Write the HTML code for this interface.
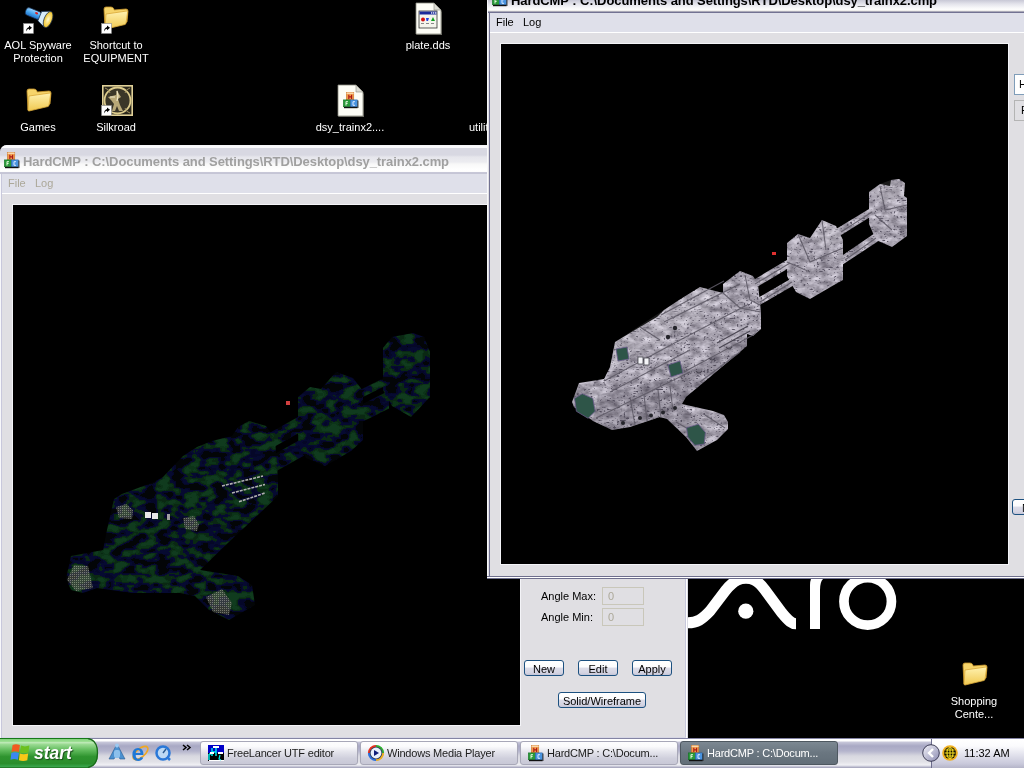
<!DOCTYPE html>
<html><head><meta charset="utf-8">
<style>
*{margin:0;padding:0;box-sizing:border-box}
html,body{width:1024px;height:768px;overflow:hidden;background:#000;font-family:"Liberation Sans",sans-serif;font-size:11px}
.a{position:absolute}
.lbl{position:absolute;color:#fff;font-size:11px;line-height:13px;text-align:center;white-space:nowrap}
.win{position:absolute;background:#e0dfe3}
.menu{position:absolute;background:#dfe0ea;border-bottom:1px solid #fff}
.menu span{position:absolute;top:3px;font-size:11px;line-height:13px}
.title{position:absolute;font-weight:bold;font-size:13px;white-space:nowrap;line-height:16px;letter-spacing:-0.08px}
.btn{position:absolute;border:1px solid #1c5180;border-radius:3px;background:linear-gradient(#fff 0%,#fcfcfd 42%,#dcdce8 52%,#d4d4e2 85%,#c4c4d6 100%);font-size:11px;text-align:center;line-height:14px;color:#000;padding-top:1px}
.tb{position:absolute;top:741px;height:24px;border-radius:3px;border:1px solid #a8a8b8;background:linear-gradient(#fdfdfe,#fbfbfc 20%,#e4e4ec 45%,#cfcfdc 75%,#c8c8d6);color:#1c1c1c;font-size:11px;line-height:22px;white-space:nowrap;letter-spacing:-0.2px}
</style></head><body><div id="root" style="position:absolute;left:0;top:0;width:1024px;height:768px;will-change:transform">

<!-- VAIO logo (wallpaper) -->
<svg class="a" style="left:0;top:0" width="1024" height="768">
  <path d="M660,622.8 L688,622.8 C697,622.8 702,619.5 710,611 L726,590 C735,579 741,578.3 746,578.3 C751,578.3 757,579 765,590 L782,613 C789,621.5 792,623.8 796,623.8" stroke="#fff" stroke-width="11" fill="none" stroke-linecap="butt"/>
  <circle cx="745.8" cy="611.2" r="7.6" fill="#fff"/>
  <path d="M810,629 L810,585 Q810,572 823,572 L823,579 Q820,582 820,590 L820,629 Z" fill="#fff"/>
  <circle cx="867.7" cy="601.4" r="23.75" stroke="#fff" stroke-width="9.7" fill="none"/>
</svg>
<!-- desktop icons -->
<svg class="a" style="left:23px;top:6px" width="32" height="24" viewBox="0 0 32 24">
<defs><linearGradient id="flb" x1="0" y1="0" x2="0" y2="1"><stop offset="0" stop-color="#9fd4ff"/><stop offset="0.5" stop-color="#4aa8f0"/><stop offset="1" stop-color="#1e6fc8"/></linearGradient>
<radialGradient id="fly" cx="0.5" cy="0.5" r="0.5"><stop offset="0" stop-color="#fffbd0"/><stop offset="1" stop-color="#f0c020"/></radialGradient></defs>
<g transform="rotate(22 16 12)">
<rect x="1" y="6" width="16" height="8" rx="3" fill="url(#flb)" stroke="#1a3050" stroke-width="0.7"/>
<path d="M16,5 L24,1.5 L24,18.5 L16,15 Z" fill="#d8ecfa" stroke="#1a3050" stroke-width="0.7"/>
<ellipse cx="25" cy="10" rx="4" ry="8.5" fill="url(#fly)" stroke="#1a3050" stroke-width="0.7"/>
<ellipse cx="12" cy="8.5" rx="1.6" ry="1" fill="#e02020"/>
</g></svg>
<svg class="a" style="left:23px;top:23px" width="11" height="11" viewBox="0 0 11 11">
<rect x="0.5" y="0.5" width="10" height="10" fill="#fff" stroke="#888" stroke-width="0.6"/>
<path d="M3,8.5 Q3,5 6,4 L6,2.5 L9,4.8 L6,7.2 L6,5.7 Q4,6 3,8.5 Z" fill="#000"/>
</svg>
<svg class="a" style="left:103px;top:6px" width="26" height="24" viewBox="0 0 26 24">
<defs><linearGradient id="fg1036" x1="0" y1="0" x2="0" y2="1"><stop offset="0" stop-color="#fff2b0"/><stop offset="1" stop-color="#f0c850"/></linearGradient></defs>
<path d="M1,3 Q1,1 3,1 L8,1 Q10,1 11,3 L11,4 L23,3 Q25,3 25,5 L24,16 L2,22 Z" fill="#f6d46a" stroke="#c8952a" stroke-width="0.8"/>
<path d="M3,8 L24,5 Q25,5 24.5,7 L23,17 Q23,18 22,18.5 L3,23 Q2,23 2,22 Z" fill="url(#fg1036)" stroke="#d9a838" stroke-width="0.8"/>
</svg>
<svg class="a" style="left:101px;top:23px" width="11" height="11" viewBox="0 0 11 11">
<rect x="0.5" y="0.5" width="10" height="10" fill="#fff" stroke="#888" stroke-width="0.6"/>
<path d="M3,8.5 Q3,5 6,4 L6,2.5 L9,4.8 L6,7.2 L6,5.7 Q4,6 3,8.5 Z" fill="#000"/>
</svg>
<svg class="a" style="left:415px;top:2px" width="28" height="33" viewBox="0 0 28 33">
<path d="M1,1 L19,1 L26,8 L26,32 L1,32 Z" fill="#fdfdf6" stroke="#8a8a80" stroke-width="0.8"/>
<path d="M19,1 L19,8 L26,8 Z" fill="#dcdcd4" stroke="#8a8a80" stroke-width="0.6"/>
<path d="M26,9 L27,10 L27,33 L2,33 L1,32 L26,32Z" fill="#6c6c64"/>
<rect x="4" y="9" width="18" height="17" fill="#f4f4ec" stroke="#333" stroke-width="0.8"/>
<rect x="4.5" y="9.5" width="17" height="3" fill="#1a2a9a"/>
<rect x="16" y="10.3" width="1.3" height="1.3" fill="#fff"/><rect x="18" y="10.3" width="1.3" height="1.3" fill="#fff"/><rect x="20" y="10.3" width="1.2" height="1.3" fill="#fff"/>
<circle cx="8" cy="17.5" r="2" fill="#d01010"/><path d="M11,16 L14,16 L13,19 L11.5,19Z" fill="#2040e0"/><path d="M16,19 L18,15 L20,19Z" fill="#10a020"/>
<rect x="6" y="21" width="3" height="1" fill="#888"/><rect x="11" y="21" width="3" height="1" fill="#888"/><rect x="16" y="21" width="3" height="1" fill="#888"/>
</svg>
<svg class="a" style="left:26px;top:88px" width="26" height="24" viewBox="0 0 26 24">
<defs><linearGradient id="fg2688" x1="0" y1="0" x2="0" y2="1"><stop offset="0" stop-color="#fff2b0"/><stop offset="1" stop-color="#f0c850"/></linearGradient></defs>
<path d="M1,3 Q1,1 3,1 L8,1 Q10,1 11,3 L11,4 L23,3 Q25,3 25,5 L24,16 L2,22 Z" fill="#f6d46a" stroke="#c8952a" stroke-width="0.8"/>
<path d="M3,8 L24,5 Q25,5 24.5,7 L23,17 Q23,18 22,18.5 L3,23 Q2,23 2,22 Z" fill="url(#fg2688)" stroke="#d9a838" stroke-width="0.8"/>
</svg>
<svg class="a" style="left:102px;top:85px" width="31" height="31" viewBox="0 0 31 31">
<rect x="0.8" y="0.8" width="29.4" height="29.4" fill="#2a271c" stroke="#e0d098" stroke-width="1.6"/>
<circle cx="15.5" cy="15.5" r="13" fill="#3a3628" stroke="#dccb8c" stroke-width="1.8"/>
<path d="M3,3 q4,1 5,5 M28,3 q-4,1 -5,5 M3,28 q4,-1 5,-5 M28,28 q-4,-1 -5,-5" stroke="#a09060" stroke-width="1" fill="none"/>
<path d="M15,5 L17,9 L19,12 L16,14 L18,20 L21,26 L17,26 L15,21 L13,26 L10,26 L12,19 L9,15 L6,12 L10,11 L14,10 Z" fill="#b8a878"/>
<path d="M15,6 L16,11 L15,16 M8,12 L13,12" stroke="#f0e8c8" stroke-width="1.2" fill="none"/>
</svg>
<svg class="a" style="left:101px;top:105px" width="11" height="11" viewBox="0 0 11 11">
<rect x="0.5" y="0.5" width="10" height="10" fill="#fff" stroke="#888" stroke-width="0.6"/>
<path d="M3,8.5 Q3,5 6,4 L6,2.5 L9,4.8 L6,7.2 L6,5.7 Q4,6 3,8.5 Z" fill="#000"/>
</svg>
<svg class="a" style="left:337px;top:84px" width="28" height="33" viewBox="0 0 28 33">
<path d="M1,1 L19,1 L26,8 L26,32 L1,32 Z" fill="#fdfdf6" stroke="#8a8a80" stroke-width="0.8"/>
<path d="M19,1 L19,8 L26,8 Z" fill="#dcdcd4" stroke="#8a8a80" stroke-width="0.6"/>
<path d="M26,9 L27,10 L27,33 L2,33 L1,32 L26,32Z" fill="#6c6c64"/>

</svg>
<svg class="a" style="left:343px;top:92px" width="17" height="17" viewBox="0 0 17 17">
<rect x="3.3" y="0.3" width="7.5" height="7.6" fill="#f39a4a" stroke="#c06a20" stroke-width="0.5"/>
<rect x="3.6" y="0.5" width="7" height="1.6" fill="#fbd8a8"/>
<path d="M5.8,2.8 L5.8,7 M8.6,2.8 L8.6,7 M5.8,4.9 L8.6,4.9" stroke="#a81818" stroke-width="1.1"/>
<rect x="0.3" y="7.9" width="7" height="6.9" fill="#2a9a3a" stroke="#0a6a1a" stroke-width="0.5"/>
<rect x="7.3" y="7.9" width="7.2" height="6.9" fill="#4a94e0" stroke="#1a5aa0" stroke-width="0.5"/>
<path d="M3,9.5 L3,13.5 M3,9.7 L5,9.7 M3,11.5 L4.6,11.5" stroke="#e0f4d8" stroke-width="1"/>
<path d="M12,9.7 L10,9.7 L10,13.3 L12,13.3" stroke="#d8e8ff" stroke-width="1" fill="none"/>
<rect x="1" y="14.8" width="13.6" height="1.4" fill="#101010"/><rect x="14.5" y="8.5" width="0.9" height="7.5" fill="#202020"/>
</svg>
<svg class="a" style="left:962px;top:662px" width="26" height="24" viewBox="0 0 26 24">
<defs><linearGradient id="fg962662" x1="0" y1="0" x2="0" y2="1"><stop offset="0" stop-color="#fff2b0"/><stop offset="1" stop-color="#f0c850"/></linearGradient></defs>
<path d="M1,3 Q1,1 3,1 L8,1 Q10,1 11,3 L11,4 L23,3 Q25,3 25,5 L24,16 L2,22 Z" fill="#f6d46a" stroke="#c8952a" stroke-width="0.8"/>
<path d="M3,8 L24,5 Q25,5 24.5,7 L23,17 Q23,18 22,18.5 L3,23 Q2,23 2,22 Z" fill="url(#fg962662)" stroke="#d9a838" stroke-width="0.8"/>
</svg>
<div class="lbl" style="left:0;top:39px;width:76px">AOL Spyware<br>Protection</div>
<div class="lbl" style="left:78px;top:39px;width:76px">Shortcut to<br>EQUIPMENT</div>
<div class="lbl" style="left:390px;top:39px;width:76px">plate.dds</div>
<div class="lbl" style="left:0;top:121px;width:76px">Games</div>
<div class="lbl" style="left:78px;top:121px;width:76px">Silkroad</div>
<div class="lbl" style="left:312px;top:121px;width:76px">dsy_trainx2....</div>
<div class="lbl" style="left:469px;top:121px;text-align:left">utilities</div>
<div class="lbl" style="left:936px;top:695px;width:76px">Shopping<br>Cente...</div>

<!-- LEFT WINDOW -->
<div class="win" id="lw" style="left:0;top:145px;width:688px;height:593px;border-radius:7px 7px 0 0;overflow:hidden">
  <div class="a" style="left:0;top:0;width:688px;height:29px;background:linear-gradient(#f0f0f4 0px,#fafafc 1px,#fafafc 2.5px,#d8d8e2 3px,#d8d8e2 10px,#e6e6ec 12px,#ececf0 17px,#f8f8f8 19px,#fff 25px,#fdfdfd 26.5px,#c8c8d8 27px,#c4c4d4 29px)"></div>
  <svg class="a" style="left:4px;top:7px" width="17" height="17" viewBox="0 0 17 17">
<rect x="3.3" y="0.3" width="7.5" height="7.6" fill="#f39a4a" stroke="#c06a20" stroke-width="0.5"/>
<rect x="3.6" y="0.5" width="7" height="1.6" fill="#fbd8a8"/>
<path d="M5.8,2.8 L5.8,7 M8.6,2.8 L8.6,7 M5.8,4.9 L8.6,4.9" stroke="#a81818" stroke-width="1.1"/>
<rect x="0.3" y="7.9" width="7" height="6.9" fill="#2a9a3a" stroke="#0a6a1a" stroke-width="0.5"/>
<rect x="7.3" y="7.9" width="7.2" height="6.9" fill="#4a94e0" stroke="#1a5aa0" stroke-width="0.5"/>
<path d="M3,9.5 L3,13.5 M3,9.7 L5,9.7 M3,11.5 L4.6,11.5" stroke="#e0f4d8" stroke-width="1"/>
<path d="M12,9.7 L10,9.7 L10,13.3 L12,13.3" stroke="#d8e8ff" stroke-width="1" fill="none"/>
<rect x="1" y="14.8" width="13.6" height="1.4" fill="#101010"/><rect x="14.5" y="8.5" width="0.9" height="7.5" fill="#202020"/>
</svg><div class="title" style="left:23px;top:9px;color:#a0a0a0">HardCMP : C:\Documents and Settings\RTD\Desktop\dsy_trainx2.cmp</div>
  <div class="menu" style="left:2px;top:29px;width:684px;height:20px;color:#aca899"><span style="left:6px">File</span><span style="left:33px">Log</span></div>
  <div class="a" style="left:0;top:29px;width:1px;height:570px;background:#f8f8fb"></div>
  <div class="a" style="left:1px;top:29px;width:1px;height:570px;background:#c8c8dc"></div>
  <div class="a" style="left:685px;top:29px;width:3px;height:570px;background:linear-gradient(90deg,#c8c8dc 0,#c8c8dc 1px,#fff 1px,#fff 2px,#dcdce4 2px)"></div>
  <div class="a" style="left:2px;top:592px;width:684px;height:1px;background:#d6d6e4"></div>
  <div class="a" style="left:12px;top:59px;width:509px;height:522px;background:#000;border:1px solid #f4f4f8"></div>
  <svg class="a" style="left:0;top:-145px" width="1024" height="768">
<defs><filter id="cmf" x="0" y="0" width="1" height="1" color-interpolation-filters="sRGB"><feTurbulence type="fractalNoise" baseFrequency="0.07 0.12" numOctaves="2" seed="9" result="n"/><feColorMatrix in="n" type="matrix" values="2.6 0 0 0 -0.85  2.6 0 0 0 -0.85  2.6 0 0 0 -0.85  0 0 0 0 1" result="g"/><feComponentTransfer in="g" result="c"><feFuncR type="discrete" tableValues="0.012 0.02 0.027 0.04 0.05 0.063"/><feFuncG type="discrete" tableValues="0.02 0.03 0.043 0.157 0.204 0.235"/><feFuncB type="discrete" tableValues="0.03 0.157 0.196 0.078 0.098 0.118"/></feComponentTransfer><feComposite in="c" in2="SourceGraphic" operator="in"/></filter>
<pattern id="mesh" width="2" height="2" patternUnits="userSpaceOnUse"><rect width="2" height="2" fill="#4a5048"/><rect width="1" height="1" fill="#a8aa98"/></pattern></defs>
<g filter="url(#cmf)">
<polygon points="66,579 71,556 103,550 107,530 114,499 122,494 154,482 163,477 183,456 197,447 212,441 232,436 238,427 249,421 266,426 275,439 278,479 278,496 260,513 232,539 200,570 238,576 252,585 255,605 229,620 209,610 195,596 180,593 132,593 97,588 83,593 71,590" fill="#000"/>
<polygon points="298,397 310,387 321,389 336,372 353,378 363,391 363,440 351,451 325,466 306,458 298,440" fill="#000"/>
<polygon points="383,348 392,337 413,333 424,337 430,352 430,397 411,417 392,406 383,390" fill="#000"/>
<polygon points="268,433.7 306,412.4 306,429 268,450.3" fill="#000"/>
<polygon points="268,457.7 306,436.4 306,454.4 268,475.7" fill="#000"/>
<polygon points="356,392 389,375.5 389,383.9 356,400.4" fill="#000"/>
<polygon points="356,407.2 389,390.7 389,408.5 356,425" fill="#000"/>
</g>
<g fill="url(#mesh)" opacity="0.68"><polygon points="67,580 74,565 88,566 93,588 76,591"/><polygon points="206,597 222,589 232,603 229,615 213,612"/>
    <polygon points="116,507 126,504 133,510 132,519 119,518"/><polygon points="183,518 194,516 199,524 197,531 185,529"/></g>
    <g fill="#e8e8e8"><rect x="145" y="512" width="6" height="6"/><rect x="152" y="513" width="6" height="6"/><rect x="167" y="514" width="3" height="6" fill="#a0a0a0"/></g>
    <g stroke="#b0b0b0" stroke-width="1.6" stroke-dasharray="3 1"><path d="M222,486 L263,476"/><path d="M232,493 L265,484.5"/><path d="M239,501.7 L265,493"/></g>
    
<rect x="286" y="401" width="4" height="4" fill="#d04040"/>
</svg>
  <div class="a" style="left:541px;top:445px;font-size:11px">Angle Max:</div>
  <div class="a" style="left:541px;top:466px;font-size:11px">Angle Min:</div>
  <div class="a" style="left:602px;top:442px;width:42px;height:18px;border:1px solid #c9c7ba;color:#aca899;padding-left:5px;line-height:16px">0</div>
  <div class="a" style="left:602px;top:463px;width:42px;height:18px;border:1px solid #c9c7ba;color:#aca899;padding-left:5px;line-height:16px">0</div>
  <div class="btn" style="left:524px;top:515px;width:40px;height:16px">New</div>
  <div class="btn" style="left:578px;top:515px;width:40px;height:16px">Edit</div>
  <div class="btn" style="left:632px;top:515px;width:40px;height:16px">Apply</div>
  <div class="btn" style="left:558px;top:547px;width:88px;height:16px">Solid/Wireframe</div>
</div>

<!-- RIGHT WINDOW -->
<div class="win" id="rw" style="left:487px;top:-16px;width:560px;height:595px;overflow:hidden">
  <div class="a" style="left:0;top:0;width:560px;height:29px;background:linear-gradient(#a0a0b8 0px,#fff 1px,#fff 2.5px,#c0c0d0 3px,#c4c4d4 12px,#c8c8d6 16px,#e4e4ec 20px,#f8f8fa 24px,#fdfdfd 26px,#e4e2de 27px,#727292 28px,#727292 29px)"></div>
  <svg class="a" style="left:5px;top:6px" width="17" height="17" viewBox="0 0 17 17">
<rect x="3.3" y="0.3" width="7.5" height="7.6" fill="#f39a4a" stroke="#c06a20" stroke-width="0.5"/>
<rect x="3.6" y="0.5" width="7" height="1.6" fill="#fbd8a8"/>
<path d="M5.8,2.8 L5.8,7 M8.6,2.8 L8.6,7 M5.8,4.9 L8.6,4.9" stroke="#a81818" stroke-width="1.1"/>
<rect x="0.3" y="7.9" width="7" height="6.9" fill="#2a9a3a" stroke="#0a6a1a" stroke-width="0.5"/>
<rect x="7.3" y="7.9" width="7.2" height="6.9" fill="#4a94e0" stroke="#1a5aa0" stroke-width="0.5"/>
<path d="M3,9.5 L3,13.5 M3,9.7 L5,9.7 M3,11.5 L4.6,11.5" stroke="#e0f4d8" stroke-width="1"/>
<path d="M12,9.7 L10,9.7 L10,13.3 L12,13.3" stroke="#d8e8ff" stroke-width="1" fill="none"/>
<rect x="1" y="14.8" width="13.6" height="1.4" fill="#101010"/><rect x="14.5" y="8.5" width="0.9" height="7.5" fill="#202020"/>
</svg><div class="title" style="left:24px;top:8.6px;color:#000">HardCMP : C:\Documents and Settings\RTD\Desktop\dsy_trainx2.cmp</div>
  <div class="menu" style="left:3px;top:29px;width:560px;height:20px;color:#000"><span style="left:6px">File</span><span style="left:33px">Log</span></div>
  <div class="a" style="left:0;top:0;width:1px;height:595px;background:#f8f8fb"></div>
  <div class="a" style="left:2px;top:29px;width:1px;height:566px;background:#727292"></div>
  <div class="a" style="left:0;top:592px;width:560px;height:1px;background:#6e6e8c"></div>
  <div class="a" style="left:0;top:593px;width:560px;height:1px;background:#fff"></div>
  <div class="a" style="left:0;top:594px;width:560px;height:1px;background:#6e6e8c"></div>
  <div class="a" style="left:13px;top:59px;width:509px;height:522px;background:#000;border:1px solid #f4f4f8"></div>
  <svg class="a" style="left:-487px;top:16px" width="1024" height="768">
<defs><filter id="txf" x="0" y="0" width="1" height="1" filterUnits="objectBoundingBox" color-interpolation-filters="sRGB"><feTurbulence type="fractalNoise" baseFrequency="0.1 0.16" numOctaves="3" seed="5" result="n"/><feColorMatrix in="n" type="matrix" values="0.6 0 0 0 0.36  0.6 0 0 0 0.34  0.6 0 0 0 0.39  0 0 0 0 1" result="c"/><feTurbulence type="turbulence" baseFrequency="0.3 0.45" numOctaves="1" seed="2" result="n2"/><feColorMatrix in="n2" type="matrix" values="0 0 0 0 0.36  0 0 0 0 0.34  0 0 0 0 0.4  5 0 0 0 -1.5" result="d"/><feComposite in="d" in2="c" operator="over" result="c2"/><feComposite in="c2" in2="SourceGraphic" operator="in"/></filter></defs>
<g filter="url(#txf)">
<polygon points="572,402 579,383 604,379 610,367 615,342 640,327 657,317 664,310 679,300 700,287 723,293 723,284 740,271 753,276 758,284 761,312 761,329 753,336 747,334 747,346 704,382 686,397 682,404 713,411 724,415 728,422 728,429 717,440 697,451 686,437 667,419 660,417 630,427 612,430 593,421 574,407" fill="#000"/>
<polygon points="787,243 798,234 810,238 822,220 836,226 843,240 843,280 834,285 810,299 796,292 787,276" fill="#000"/>
<polygon points="869,192 880,184 890,186 891,180 899,179 905,183 904,196 907,198 907,236 892,247 876,240 869,224" fill="#000"/>
<polygon points="750,282 792,257 794,265 752,290" fill="#000"/>
<polygon points="756,299 794,277 796,284 758,306" fill="#000"/>
<polygon points="836,229 874,206 875,214 838,237" fill="#000"/>
<polygon points="840,257 878,231 880,240 842,265" fill="#000"/>
</g>
<g fill="#2a2634" opacity="0.16"><polygon points="593,421 598,395 685,374 704,382 686,397 682,404 667,419 660,417 630,427 612,430"/>
    <polygon points="668,383 748,338 747,346 704,382 686,397 682,404"/><polygon points="574,407 579,383 592,396 590,418"/><polygon points="667,419 686,437 697,451 705,432 682,404"/></g>
    <g fill="#ffffff" opacity="0.1"><polygon points="610,367 615,342 679,300 700,287 723,293 700,320 640,355"/><polygon points="822,220 836,226 843,240 826,250 810,238"/><polygon points="880,184 891,180 905,183 904,196 885,205 869,192"/></g>
    <g stroke="#5e5a66" stroke-width="1.1" fill="none" opacity="0.9">
    <path d="M604,381 L682,339 L747,305"/><path d="M610,392 L690,350"/><path d="M596,418 L690,372"/>
    <path d="M630,397 L635,425"/><path d="M644,395 L647,421"/><path d="M658,390 L661,418"/><path d="M670,386 L673,411"/>
    <path d="M661,315 L724,281"/><path d="M664,322 L740,284"/><path d="M640,327 L660,340"/>
    <path d="M723,293 L740,308 L761,312"/><path d="M700,382 L740,352"/><path d="M684,372 L755,334"/>
    <path d="M798,234 L810,262 L843,248"/><path d="M787,262 L810,272"/><path d="M822,220 L826,250"/>
    <path d="M880,186 L885,210 L907,205"/><path d="M875,215 L892,230"/><path d="M745,275 L750,300 L760,305"/>
    <path d="M755,284 L790,263"/><path d="M760,302 L792,282"/><path d="M841,232 L872,212"/><path d="M845,260 L876,238"/>
    <path d="M705,415 L725,428"/><path d="M690,430 L676,422"/>
    </g>
    <g fill="#2e5548" stroke="#6a5a8a" stroke-width="0.8"><polygon points="574.5,398.4 582.3,393.7 592.8,398.4 595.2,411.3 588.1,418.3 576.4,411.3"/>
    <polygon points="686.6,427.7 698.3,424.2 705.4,432.4 704.2,444.1 694.8,445.3 687.8,437.1"/>
    <polygon points="616,349 627,347 629,359 618,361"/><polygon points="668,365 680,361 683,373 671,377"/></g>
    <g fill="#f4f4f8" stroke="#303038" stroke-width="0.7"><rect x="638" y="357" width="5" height="7"/><rect x="644" y="358" width="5" height="7"/></g>
    <g fill="#24242a"><circle cx="623" cy="423" r="2"/><circle cx="640" cy="418" r="2"/><circle cx="651" cy="415.5" r="2"/><circle cx="663" cy="412.5" r="2"/><circle cx="675" cy="408" r="2"/>
    <circle cx="675" cy="328" r="2.2"/><circle cx="668" cy="337" r="2.2"/></g>
    <g stroke="#4a4652" stroke-width="1.2" fill="none"><path d="M696,371 q3,4 6,0"/><path d="M709,358 q3,4 6,0"/><path d="M726,347 q3,4 6,0"/>
    <path d="M717,343 L748,326"/><path d="M719,348 L750,331"/></g>
    
<rect x="772" y="252" width="4" height="3" fill="#e03030"/>
</svg>
  <div class="a" style="left:527px;top:90px;width:40px;height:21px;background:#fff;border:1px solid #7f9db9;padding-left:4px;line-height:19px">H</div>
  <div class="a" style="left:527px;top:116px;width:40px;height:21px;border:1px solid #b4b4b4;padding-left:6px;line-height:19px">R</div>
  <div class="btn" style="left:525px;top:515px;width:60px;height:16px;text-align:left;padding-left:9px">New</div>
</div>

<!-- TASKBAR -->
<div class="a" style="left:0;top:738px;width:1024px;height:30px;background:linear-gradient(#8484a4 0,#8484a4 1px,#fff 1px,#fff 3px,#c8c8da 4px,#a8a8c4 8px,#b4b4cc 13px,#d8d8e0 18px,#e2e2e8 24px,#f0f0f4 27px,#b8b8cc 29px,#9c9cb4 30px)"></div>
<svg class="a" style="left:0;top:738px" width="100" height="30" viewBox="0 0 100 30">
<defs><linearGradient id="sg" x1="0" y1="0" x2="0" y2="1"><stop offset="0" stop-color="#177817"/><stop offset="0.034" stop-color="#177817"/><stop offset="0.04" stop-color="#84d47c"/><stop offset="0.14" stop-color="#a4e29a"/><stop offset="0.16" stop-color="#d4efd0"/><stop offset="0.19" stop-color="#a0de98"/><stop offset="0.4" stop-color="#62bc5e"/><stop offset="0.62" stop-color="#2f942f"/><stop offset="0.85" stop-color="#2a8e2c"/><stop offset="0.95" stop-color="#38a44a"/><stop offset="1" stop-color="#1b6a1b"/></linearGradient></defs>
<path d="M0,0 L88,0 Q98,2 98,15 Q98,28 88,30 L0,30 Z" fill="url(#sg)"/>
<path d="M88,0.5 Q97.5,2 97.5,15 Q97.5,28 88,29.5" stroke="#1a6a1a" stroke-width="1.3" fill="none"/>
<g transform="translate(10.5,5.5) scale(1.05)">
<path d="M2,1.5 Q5,0 9,1.5 L8,8 Q4,6.8 1,8 Z" fill="#f05a20"/>
<path d="M10,2 Q13.5,3.5 18,2 L17,8.5 Q13,10 9,8.5 Z" fill="#6cc020"/>
<path d="M0.8,9 Q4,7.8 8,9 L7,15.5 Q3.5,14 0,15.5 Z" fill="#3a88f0"/>
<path d="M8.8,9.5 Q12.5,11 16.8,9.5 L16,16 Q12,17.5 8,16 Z" fill="#f8c818"/>
</g>
</svg>
<div class="a" style="left:34px;top:742.5px;color:#fff;font-weight:bold;font-style:italic;font-size:17.5px;line-height:20px;letter-spacing:0px;text-shadow:1px 1px 1px #1a4d1a">start</div>
<!-- quick launch -->
<svg class="a" style="left:104px;top:742px" width="92" height="22" viewBox="0 0 92 22">
<path d="M13,2 L21,17 L16,17 L13,12 L10,17 L5,17 Z" fill="#4a90d0" stroke="#2a5a90" stroke-width="0.6"/>
<circle cx="13" cy="3.5" r="2" fill="#9cc8f0"/><rect x="10" y="8" width="6" height="8" rx="2" fill="#8cc0ec"/>
<ellipse cx="36.5" cy="11" rx="9" ry="4.2" transform="rotate(-40 36.5 11)" fill="none" stroke="#f0a820" stroke-width="1.6"/><text x="27.5" y="18.5" font-family="Liberation Sans" font-weight="bold" font-size="23" fill="#1f78d6">e</text>
<circle cx="59" cy="11" r="6.5" fill="#bcd8f4" stroke="#2a78d8" stroke-width="2.5"/><path d="M59,11 L62,7" stroke="#2a5a90" stroke-width="1.4"/><path d="M63,15 L66,18" stroke="#2a78d8" stroke-width="2.5"/>
<path d="M79,3 L82,5.5 L79,8 M83,3 L86,5.5 L83,8" stroke="#000" stroke-width="1.5" fill="none"/>
</svg>
<div class="tb" style="left:200px;width:158px;padding-left:26px">FreeLancer UTF editor</div>
<div class="tb" style="left:360px;width:158px;padding-left:26px">Windows Media Player</div>
<div class="tb" style="left:520px;width:158px;padding-left:26px">HardCMP : C:\Docum...</div>
<div class="tb" style="left:680px;width:158px;padding-left:26px;background:linear-gradient(#7c8892,#6a7680 50%,#626e78);border-color:#4e5860;color:#fff">HardCMP : C:\Docum...</div>
<svg class="a" style="left:208px;top:745px" width="16" height="16" viewBox="0 0 16 16">
<rect x="0" y="0" width="16" height="8" fill="#0000c8"/><rect x="0" y="8" width="16" height="8" fill="#000"/>
<rect x="1" y="15" width="15" height="1" fill="#fff"/><rect x="5" y="1" width="6" height="2" fill="#fff"/>
<path d="M4,3 L4,11 M4,7 L8,7 M8,3 L8,11" stroke="#00e8e8" stroke-width="1.5"/><path d="M1,9 L1,15 M1,9 L3,9" stroke="#00e8e8" stroke-width="1.5"/><path d="M12,10 L11,14 L13,15" stroke="#00e8e8" stroke-width="1.2" fill="none"/>
<rect x="2" y="7" width="4" height="2" fill="#fff"/><rect x="10" y="7" width="5" height="2" fill="#fff"/>
</svg>
<svg class="a" style="left:367px;top:744px" width="18" height="18" viewBox="0 0 18 18">
<circle cx="9" cy="9" r="7.6" fill="#304060"/>
<path d="M9,1.8 A7.2,7.2 0 0 1 16.2,9" stroke="#30b030" stroke-width="1.8" fill="none"/>
<path d="M16.2,9 A7.2,7.2 0 0 1 9,16.2" stroke="#f0b020" stroke-width="1.8" fill="none"/>
<path d="M9,16.2 A7.2,7.2 0 0 1 1.8,9" stroke="#2a70e0" stroke-width="1.8" fill="none"/>
<path d="M1.8,9 A7.2,7.2 0 0 1 9,1.8" stroke="#e83020" stroke-width="1.8" fill="none"/>
<circle cx="9" cy="9" r="5.4" fill="#e8f0fc"/><path d="M7,6 L12,9 L7,12 Z" fill="#10207a"/>
</svg>
<svg class="a" style="left:528px;top:745px" width="17" height="17" viewBox="0 0 17 17">
<rect x="3.3" y="0.3" width="7.5" height="7.6" fill="#f39a4a" stroke="#c06a20" stroke-width="0.5"/>
<rect x="3.6" y="0.5" width="7" height="1.6" fill="#fbd8a8"/>
<path d="M5.8,2.8 L5.8,7 M8.6,2.8 L8.6,7 M5.8,4.9 L8.6,4.9" stroke="#a81818" stroke-width="1.1"/>
<rect x="0.3" y="7.9" width="7" height="6.9" fill="#2a9a3a" stroke="#0a6a1a" stroke-width="0.5"/>
<rect x="7.3" y="7.9" width="7.2" height="6.9" fill="#4a94e0" stroke="#1a5aa0" stroke-width="0.5"/>
<path d="M3,9.5 L3,13.5 M3,9.7 L5,9.7 M3,11.5 L4.6,11.5" stroke="#e0f4d8" stroke-width="1"/>
<path d="M12,9.7 L10,9.7 L10,13.3 L12,13.3" stroke="#d8e8ff" stroke-width="1" fill="none"/>
<rect x="1" y="14.8" width="13.6" height="1.4" fill="#101010"/><rect x="14.5" y="8.5" width="0.9" height="7.5" fill="#202020"/>
</svg>
<svg class="a" style="left:688px;top:745px" width="17" height="17" viewBox="0 0 17 17">
<rect x="3.3" y="0.3" width="7.5" height="7.6" fill="#f39a4a" stroke="#c06a20" stroke-width="0.5"/>
<rect x="3.6" y="0.5" width="7" height="1.6" fill="#fbd8a8"/>
<path d="M5.8,2.8 L5.8,7 M8.6,2.8 L8.6,7 M5.8,4.9 L8.6,4.9" stroke="#a81818" stroke-width="1.1"/>
<rect x="0.3" y="7.9" width="7" height="6.9" fill="#2a9a3a" stroke="#0a6a1a" stroke-width="0.5"/>
<rect x="7.3" y="7.9" width="7.2" height="6.9" fill="#4a94e0" stroke="#1a5aa0" stroke-width="0.5"/>
<path d="M3,9.5 L3,13.5 M3,9.7 L5,9.7 M3,11.5 L4.6,11.5" stroke="#e0f4d8" stroke-width="1"/>
<path d="M12,9.7 L10,9.7 L10,13.3 L12,13.3" stroke="#d8e8ff" stroke-width="1" fill="none"/>
<rect x="1" y="14.8" width="13.6" height="1.4" fill="#101010"/><rect x="14.5" y="8.5" width="0.9" height="7.5" fill="#202020"/>
</svg>
<div class="a" style="left:931px;top:738px;width:93px;height:30px;background:linear-gradient(#8484a4 0,#8484a4 1px,#fff 1px,#fbfbfd 8px,#e4e4ee 16px,#c8c8da 26px,#b4b4c8 30px)"></div>
<div class="a" style="left:931px;top:739px;width:1px;height:29px;background:#6c6c8c"></div>
<svg class="a" style="left:921px;top:743px" width="38" height="20" viewBox="0 0 38 20">
<defs><linearGradient id="cg" x1="0" y1="0" x2="1" y2="1"><stop offset="0" stop-color="#f4f4fa"/><stop offset="1" stop-color="#8a8ab0"/></linearGradient></defs>
<circle cx="10" cy="10" r="8.3" fill="url(#cg)" stroke="#30304a" stroke-width="0.9"/>
<path d="M12,6 L8,10 L12,14" stroke="#fff" stroke-width="2.4" fill="none"/>
<circle cx="29" cy="10" r="7.8" fill="#f0b020"/><circle cx="29" cy="10" r="6" fill="#101000"/>
<g stroke="#f8e020" stroke-width="1.1" fill="none"><path d="M29,4.5 L29,15.5 M23.5,10 L34.5,10 M24.5,7 L33.5,7 M24.5,13 L33.5,13"/><ellipse cx="29" cy="10" rx="3" ry="5.5"/></g>
</svg>
<div class="a" style="left:964px;top:746px;font-size:11px;line-height:14px;color:#000">11:32 AM</div>
</div></body></html>
